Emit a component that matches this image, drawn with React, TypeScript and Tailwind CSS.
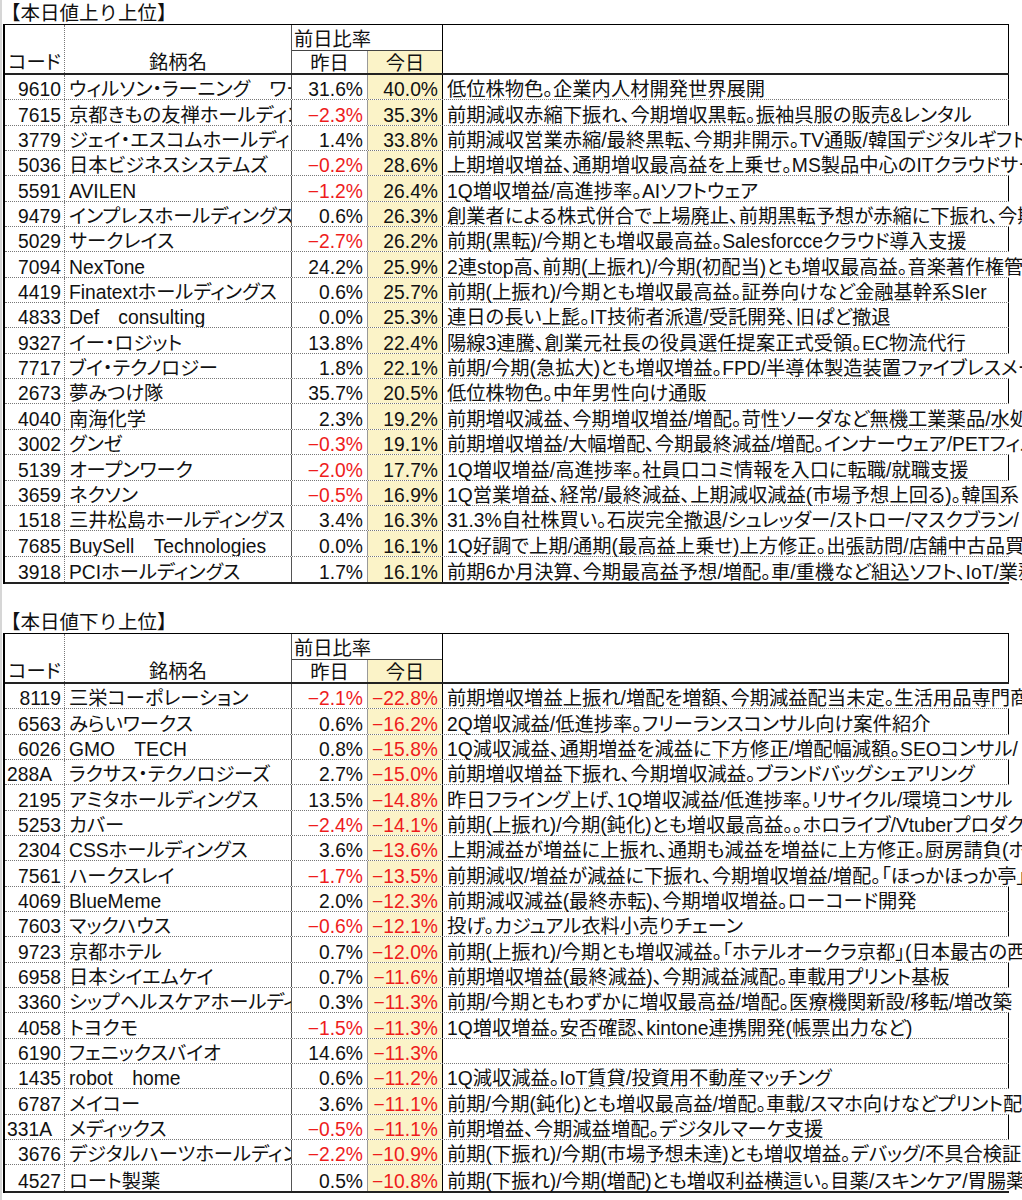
type Row = [string, string, string, string, string, boolean?];

// [code, name, yesterday, today, comment, overflows]
const gainers: Row[] = [
  ['9610', 'ウィルソン・ラーニング　ワールドワイド', '31.6%', '40.0%', '低位株物色。企業内人材開発世界展開'],
  ['7615', '京都きもの友禅ホールディングス', '−2.3%', '35.3%', '前期減収赤縮下振れ、今期増収黒転。振袖呉服の販売&レンタル'],
  ['3779', 'ジェイ・エスコムホールディングス', '1.4%', '33.8%', '前期減収営業赤縮/最終黒転、今期非開示。TV通販/韓国デジタルギフト', true],
  ['5036', '日本ビジネスシステムズ', '−0.2%', '28.6%', '上期増収増益、通期増収最高益を上乗せ。MS製品中心のITクラウドサービス', true],
  ['5591', 'AVILEN', '−1.2%', '26.4%', '1Q増収増益/高進捗率。AIソフトウェア'],
  ['9479', 'インプレスホールディングス', '0.6%', '26.3%', '創業者による株式併合で上場廃止、前期黒転予想が赤縮に下振れ、今期', true],
  ['5029', 'サークレイス', '−2.7%', '26.2%', '前期(黒転)/今期とも増収最高益。Salesforcceクラウド導入支援'],
  ['7094', 'NexTone', '24.2%', '25.9%', '2連stop高、前期(上振れ)/今期(初配当)とも増収最高益。音楽著作権管理', true],
  ['4419', 'Finatextホールディングス', '0.6%', '25.7%', '前期(上振れ)/今期とも増収最高益。証券向けなど金融基幹系SIer'],
  ['4833', 'Def　consulting', '0.0%', '25.3%', '連日の長い上髭。IT技術者派遣/受託開発、旧ぱど撤退'],
  ['9327', 'イー・ロジット', '13.8%', '22.4%', '陽線3連騰、創業元社長の役員選任提案正式受領。EC物流代行'],
  ['7717', 'ブイ・テクノロジー', '1.8%', '22.1%', '前期/今期(急拡大)とも増収増益。FPD/半導体製造装置ファイブレスメーカー', true],
  ['2673', '夢みつけ隊', '35.7%', '20.5%', '低位株物色。中年男性向け通販'],
  ['4040', '南海化学', '2.3%', '19.2%', '前期増収減益、今期増収増益/増配。苛性ソーダなど無機工業薬品/水処理', true],
  ['3002', 'グンゼ', '−0.3%', '19.1%', '前期増収増益/大幅増配、今期最終減益/増配。インナーウェア/PETフィルム', true],
  ['5139', 'オープンワーク', '−2.0%', '17.7%', '1Q増収増益/高進捗率。社員口コミ情報を入口に転職/就職支援'],
  ['3659', 'ネクソン', '−0.5%', '16.9%', '1Q営業増益、経常/最終減益、上期減収減益(市場予想上回る)。韓国系', true],
  ['1518', '三井松島ホールディングス', '3.4%', '16.3%', '31.3%自社株買い。石炭完全撤退/シュレッダー/ストロー/マスクブラン/', true],
  ['7685', 'BuySell　Technologies', '0.0%', '16.1%', '1Q好調で上期/通期(最高益上乗せ)上方修正。出張訪問/店舗中古品買取', true],
  ['3918', 'PCIホールディングス', '1.7%', '16.1%', '前期6か月決算、今期最高益予想/増配。車/重機など組込ソフト、IoT/業務', true],
];

const losers: Row[] = [
  ['8119', '三栄コーポレーション', '−2.1%', '−22.8%', '前期増収増益上振れ/増配を増額、今期減益配当未定。生活用品専門商社', true],
  ['6563', 'みらいワークス', '0.6%', '−16.2%', '2Q増収減益/低進捗率。フリーランスコンサル向け案件紹介'],
  ['6026', 'GMO　TECH', '0.8%', '−15.8%', '1Q減収減益、通期増益を減益に下方修正/増配幅減額。SEOコンサル/', true],
  ['288A', 'ラクサス・テクノロジーズ', '2.7%', '−15.0%', '前期増収増益下振れ、今期増収減益。ブランドバッグシェアリング'],
  ['2195', 'アミタホールディングス', '13.5%', '−14.8%', '昨日フライング上げ、1Q増収減益/低進捗率。リサイクル/環境コンサル', true],
  ['5253', 'カバー', '−2.4%', '−14.1%', '前期(上振れ)/今期(鈍化)とも増収最高益。。ホロライブ/Vtuberプロダクション', true],
  ['2304', 'CSSホールディングス', '3.6%', '−13.6%', '上期減益が増益に上振れ、通期も減益を増益に上方修正。厨房請負(ホテル', true],
  ['7561', 'ハークスレイ', '−1.7%', '−13.5%', '前期減収/増益が減益に下振れ、今期増収増益/増配。「ほっかほっか亭」', true],
  ['4069', 'BlueMeme', '2.0%', '−12.3%', '前期減収減益(最終赤転)、今期増収増益。ローコード開発'],
  ['7603', 'マックハウス', '−0.6%', '−12.1%', '投げ。カジュアル衣料小売りチェーン'],
  ['9723', '京都ホテル', '0.7%', '−12.0%', '前期(上振れ)/今期とも増収減益。「ホテルオークラ京都」(日本最古の西洋式ホテル)', true],
  ['6958', '日本シイエムケイ', '0.7%', '−11.6%', '前期増収増益(最終減益)、今期減益減配。車載用プリント基板'],
  ['3360', 'シップヘルスケアホールディングス', '0.3%', '−11.3%', '前期/今期ともわずかに増収最高益/増配。医療機関新設/移転/増改築', true],
  ['4058', 'トヨクモ', '−1.5%', '−11.3%', '1Q増収増益。安否確認、kintone連携開発(帳票出力など)'],
  ['6190', 'フェニックスバイオ', '14.6%', '−11.3%', ''],
  ['1435', 'robot　home', '0.6%', '−11.2%', '1Q減収減益。IoT賃貸/投資用不動産マッチング'],
  ['6787', 'メイコー', '3.6%', '−11.1%', '前期/今期(鈍化)とも増収最高益/増配。車載/スマホ向けなどプリント配線板', true],
  ['331A', 'メディックス', '−0.5%', '−11.1%', '前期増益、今期減益増配。デジタルマーケ支援'],
  ['3676', 'デジタルハーツホールディングス', '−2.2%', '−10.9%', '前期(下振れ)/今期(市場予想未達)とも増収増益。デバッグ/不具合検証', true],
  ['4527', 'ロート製薬', '0.5%', '−10.8%', '前期(下振れ)/今期(増配)とも増収利益横這い。目薬/スキンケア/胃腸薬', true],
];

function pct(v: string) {
  return v.startsWith('−') ? 'text-[#ee1c1c]' : 'text-[#111]';
}

function Header() {
  return (
    <div className="flex h-[51px] border-t border-b-2 border-t-black border-b-[#222]">
      <div className="w-[60px] flex items-end justify-center pb-[1px] border-r border-dotted border-r-[#777] leading-[19px]">コード</div>
      <div className="w-[227px] flex items-end justify-center pb-[1px] border-r border-r-[#555] leading-[19px]">銘柄名</div>
      <div className="w-[151px] flex flex-col border-r border-r-black">
        <div className="h-[26px] flex items-end pl-[2px] pb-[1px] border-b border-b-[#444] leading-[19px]">前日比率</div>
        <div className="flex-1 flex">
          <div className="w-[76px] flex items-end justify-center border-r border-r-[#999] leading-[19px]">昨日</div>
          <div className="flex-1 flex items-end justify-center bg-[#fbf3c8] leading-[19px]">今日</div>
        </div>
      </div>
      <div className="w-[566px] border-r border-r-black" />
    </div>
  );
}

function DataRow({ r, last }: { r: Row; last: boolean }) {
  const [code, name, y, t, note, over] = r;
  const numeric = /^\d+$/.test(code);
  return (
    <div className={`flex h-[25.35px] leading-[19px] ${last ? '' : 'border-b border-dotted border-b-[#777]'}`}>
      <div className={`w-[60px] flex items-end border-r border-dotted border-r-[#777] ${numeric ? 'justify-end pr-[3px]' : 'pl-[2px]'}`}>{code}</div>
      <div className="w-[227px] flex items-end pl-[4px] overflow-hidden whitespace-nowrap border-r border-r-[#555]">{name}</div>
      <div className={`w-[76px] flex items-end justify-end pr-[4px] border-r border-r-[#999] ${pct(y)}`}>{y}</div>
      <div className={`w-[75px] flex items-end justify-end pr-[4px] bg-[#fbf3c8] border-r border-r-black ${pct(t)}`}>{t}</div>
      <div className={`w-[566px] flex items-end pl-[4px] whitespace-nowrap border-r ${over ? 'border-r-transparent' : 'border-r-black'}`}>{note}</div>
    </div>
  );
}

function Table({ rows }: { rows: Row[] }) {
  return (
    <div className="ml-[3px] w-[1006px] border-l-2 border-l-black">
      <Header />
      <div className="border-b-2 border-b-[#222]">
        {rows.map((r, i) => (
          <DataRow key={r[0]} r={r} last={i === rows.length - 1} />
        ))}
      </div>
    </div>
  );
}

function Title({ children }: { children: string }) {
  return (
    <div className="h-[24px] flex items-end pl-[1px] leading-[22px] text-[19.5px] [font-feature-settings:normal]">{children}</div>
  );
}

export default function App() {
  return (
    <div className="relative w-[1022px] h-[1200px] overflow-hidden bg-white text-[#111] text-[19.3px] font-['Liberation_Sans','Noto_Sans_CJK_JP',sans-serif] [font-feature-settings:'palt']">
      {/* 左端のグレー線 */}
      <div className="absolute left-0 top-0 w-[2px] h-full bg-[#d6d6d6]" />
      <Title>【本日値上り上位】</Title>
      <Table rows={gainers} />
      <div className="h-[25px]" />
      <Title>【本日値下り上位】</Title>
      <Table rows={losers} />
    </div>
  );
}
